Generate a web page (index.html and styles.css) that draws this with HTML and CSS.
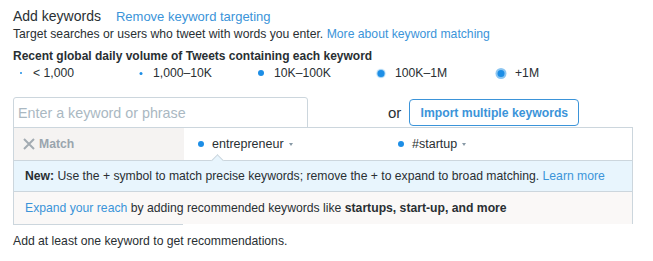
FILE: index.html
```html
<!DOCTYPE HTML>
<html>
<head>
<title>Add keywords</title>
<meta name="viewport" content="width=device-width, initial-scale=1">
<link rel="stylesheet" href="styles.css">
</head>
<body>
<div class="page">
  <div class="head">
    <h2>Add keywords</h2>
    <a href="#" class="link">Remove keyword targeting</a>
  </div>
  <p class="sub">Target searches or users who tweet with words you enter. <a href="#" class="link">More about keyword matching</a></p>
  <p class="volume">Recent global daily volume of Tweets containing each keyword</p>
  <ul class="legend">
    <li><span class="dot d1"></span>&lt; 1,000</li>
    <li><span class="dot d2"></span>1,000–10K</li>
    <li><span class="dot d3"></span>10K–100K</li>
    <li><span class="dot d4"></span>100K–1M</li>
    <li><span class="dot d5"></span>+1M</li>
  </ul>
  <div class="entry">
    <input type="text" class="kw-input" placeholder="Enter a keyword or phrase">
    <span class="or">or</span>
    <button class="import">Import multiple keywords</button>
  </div>
  <div class="box">
    <div class="row">
      <div class="match">
        <svg width="12" height="12" viewBox="0 0 12 12"><path d="M1 1L11 11M11 1L1 11" stroke="#a3abb2" stroke-width="2" fill="none"/></svg>
        <span>Match</span>
      </div>
      <div class="kw"><span class="dot d3"></span>entrepreneur<span class="caret"></span></div>
      <div class="kw"><span class="dot d3"></span>#startup<span class="caret"></span></div>
    </div>
    <div class="info">
      <span class="notch"></span>
      <b>New:</b> Use the + symbol to match precise keywords; remove the + to expand to broad matching. <a href="#" class="link">Learn more</a>
    </div>
    <div class="expand">
      <a href="#" class="link">Expand your reach</a> by adding recommended keywords like <b>startups, start-up, and more</b>
    </div>
  </div>
  <p class="hint">Add at least one keyword to get recommendations.</p>
</div>
</body>
</html>
```

FILE: styles.css
```css
body{
	margin:0;
	font-family:"Liberation Sans", Arial, sans-serif;
	font-size:12.2px;
	color:#292f33;
	background:#fff;
}
.page{
	width:620px;
	margin-left:13px;
	padding-top:7px;
}
.link{
	color:#3b94d9;
	text-decoration:none;
}
.head{
	display:flex;
	align-items:baseline;
	gap:15px;
	height:18px;
	line-height:18px;
}
.head h2{
	margin:0;
	font-size:14px;
	font-weight:normal;
	color:#292f33;
}
.head .link{ font-size:13px; }
.sub, .volume, .hint{
	margin:0;
	line-height:16px;
}
.sub{ margin-top:1px; }
.volume{
	margin-top:6px;
	font-weight:bold;
	font-size:12px;
}
.legend{
	list-style:none;
	margin:1px 0 0;
	padding:0;
	display:flex;
	line-height:16px;
}
.legend li{
	width:120px;
	display:flex;
	align-items:center;
}
.legend .dot{
	margin-left:8px;
	transform:translateX(-50%);
}
.dot{
	display:inline-block;
	border-radius:50%;
	background:#1d8ee6;
	flex:none;
}
.d1{ width:2px; height:2px; margin-right:10px; }
.d2{ width:3px; height:3px; margin-right:9px; }
.d3{ width:6px; height:6px; margin-right:7px; }
.d4{ width:7px; height:7px; box-shadow:0 0 1px 1px #9cd0f5; margin-right:7px; }
.d5{ width:7px; height:7px; box-shadow:0 0 0 2px #8cc6f2; margin-right:7px; }
.entry{
	margin-top:16px;
	display:flex;
	align-items:center;
}
.kw-input{
	width:295px;
	height:31px;
	box-sizing:border-box;
	margin:0;
	padding:0 4px;
	border:1px solid #ccd6dd;
	border-radius:3px 3px 0 0;
	font-family:inherit;
	font-size:14.3px;
	color:#292f33;
}
.kw-input::placeholder{ color:#aab8c2; }
.or{
	margin-left:80px;
	font-size:15px;
	color:#292f33;
}
.import{
	margin-left:8px;
	width:170px;
	height:27px;
	border:1px solid #3b94d9;
	border-radius:4px;
	background:#fff;
	color:#3b94d9;
	font-family:inherit;
	font-size:12.2px;
	font-weight:bold;
	padding:0;
}
.box{
	margin-top:-1px;
	border:1px solid #ccd6dd;
	border-bottom:0;
	position:relative;
}
.row{
	display:flex;
	height:32px;
	align-items:stretch;
}
.match{
	width:170px;
	background:#f5f3f2;
	display:flex;
	align-items:center;
	padding-left:9px;
	box-sizing:border-box;
	gap:4px;
	color:#9aa5ae;
	font-weight:bold;
}
.kw{
	width:200px;
	display:flex;
	align-items:center;
	padding-left:14px;
	box-sizing:border-box;
	font-size:12.5px;
}
.kw .dot{ margin-right:8px; }
.caret{
	display:inline-block;
	margin-left:5px;
	border-left:2.5px solid transparent;
	border-right:2.5px solid transparent;
	border-top:3px solid #8899a6;
}
.info{
	position:relative;
	border-top:1px solid #ccd6dd;
	background:#e8f5fd;
	height:30px;
	line-height:30px;
	padding-left:11px;
}
.notch{
	position:absolute;
	left:199px;
	top:-5px;
	width:8px;
	height:8px;
	background:#e8f5fd;
	border-top:1px solid #ccd6dd;
	border-left:1px solid #ccd6dd;
	transform:rotate(45deg);
}
.expand{
	position:relative;
	border-top:1px solid #ccd6dd;
	background:#faf8f7;
	height:32px;
	line-height:32px;
	padding-left:11px;
}
.expand::after{
	content:'';
	position:absolute;
	left:-1px;
	bottom:-1px;
	width:170px;
	height:1px;
	background:#ccd6dd;
}
.hint{
	margin-top:9px;
}
```
